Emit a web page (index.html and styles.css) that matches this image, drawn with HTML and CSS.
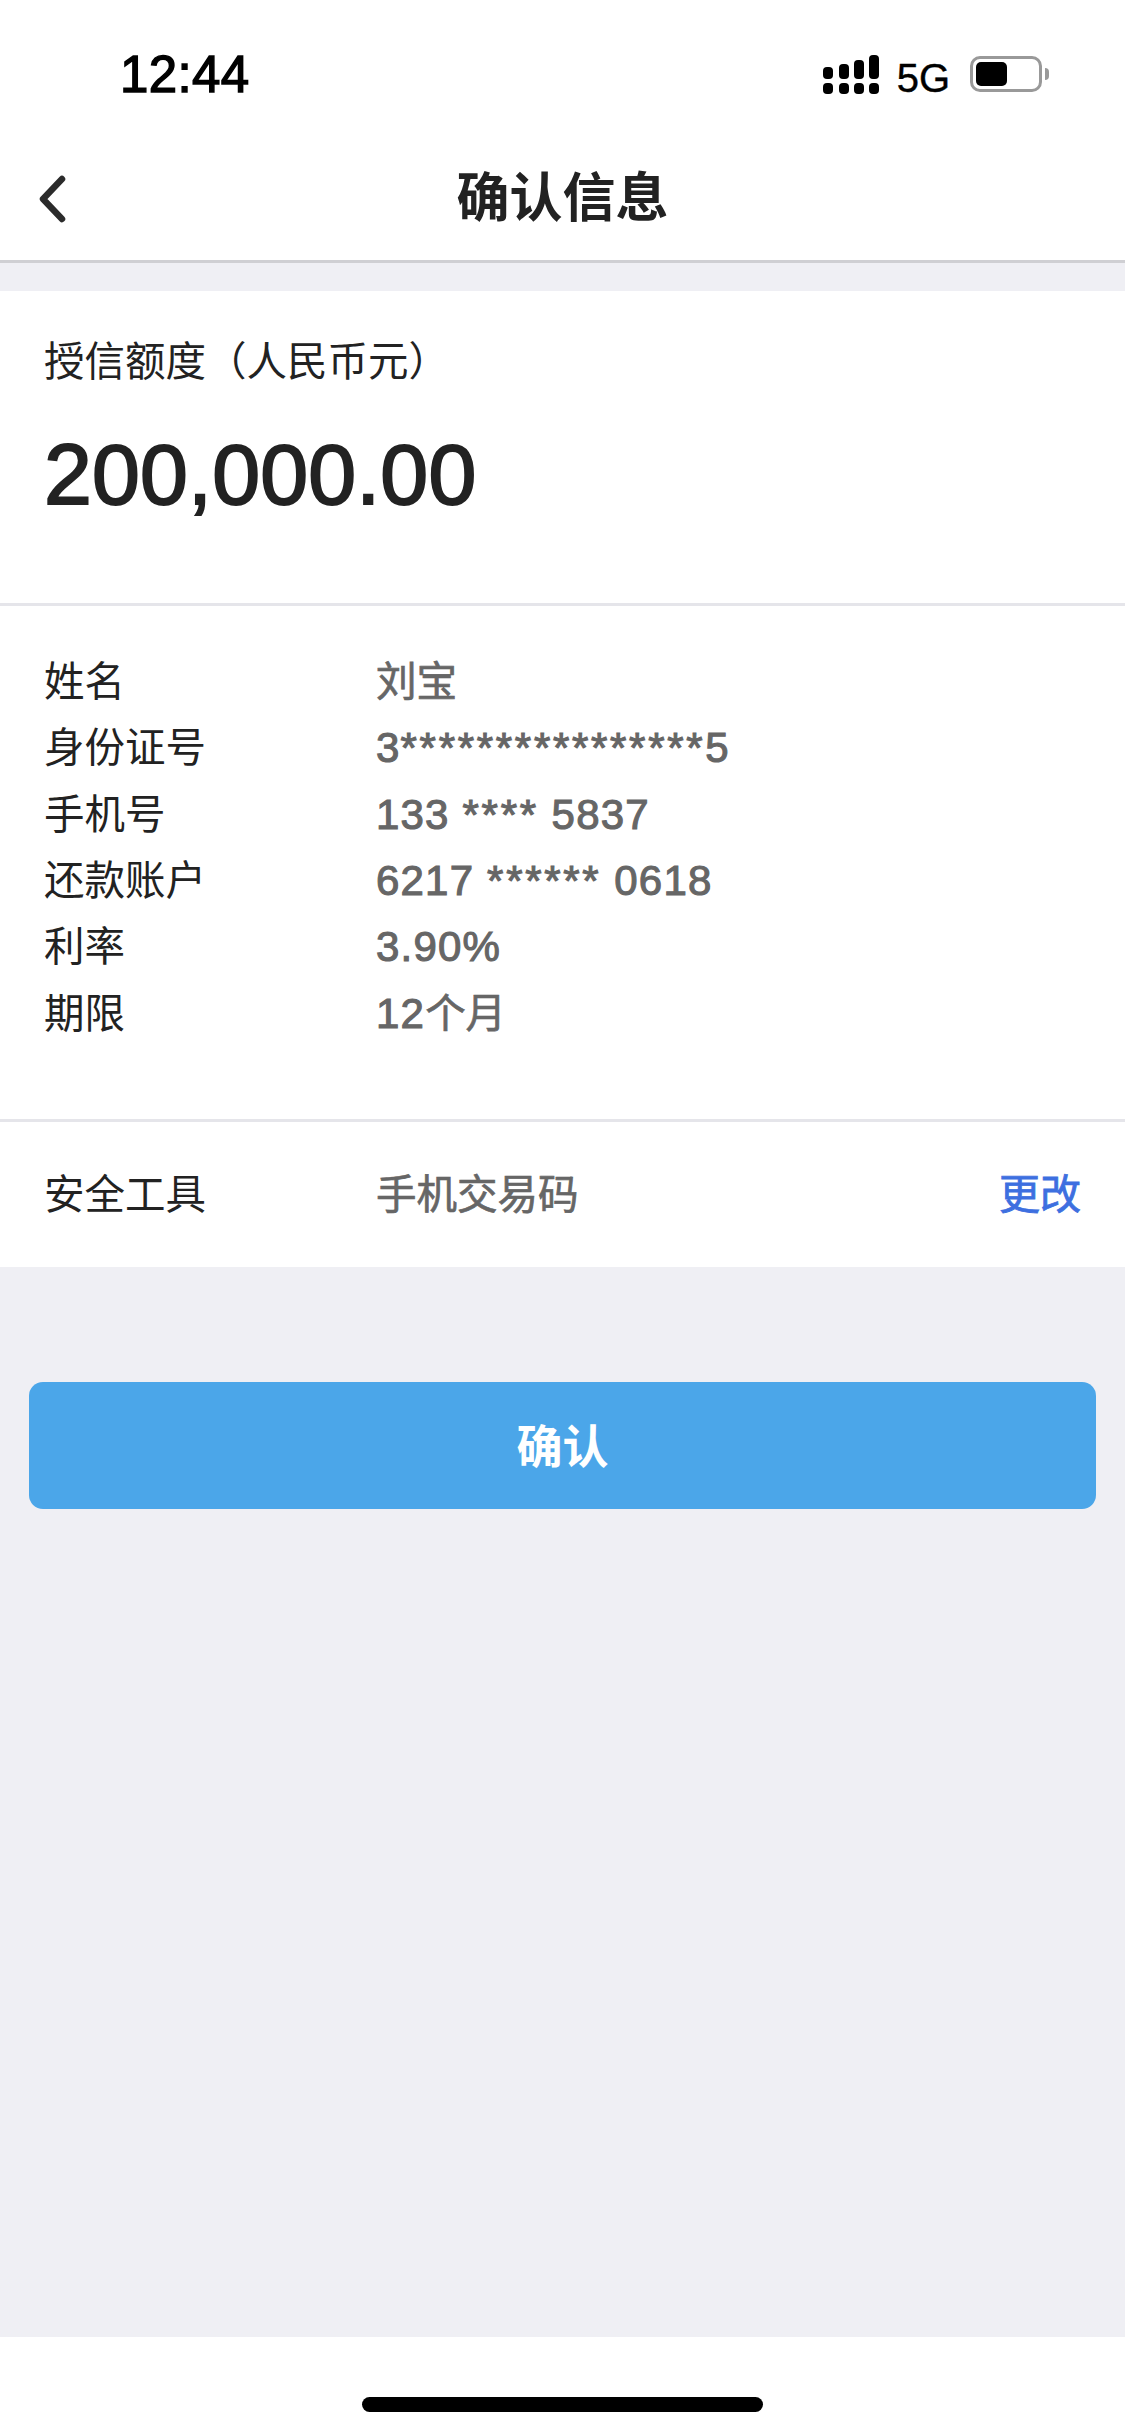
FILE: index.html
```html
<!DOCTYPE html>
<html lang="zh-CN">
<head>
<meta charset="utf-8">
<title>确认信息</title>
<link rel="stylesheet" href="styles.css">
</head>
<body>
<div class="page">
  <header class="status-bar">
    <span class="clock">12:44</span>
    <div class="status-icons">
      <svg class="signal" width="58" height="40" viewBox="0 0 58 40" aria-hidden="true">
        <rect x="0" y="12" width="10" height="12" rx="4"/>
        <rect x="16" y="9" width="10" height="15" rx="4"/>
        <rect x="31" y="5" width="10" height="19" rx="4"/>
        <rect x="46" y="0" width="10" height="24" rx="4"/>
        <rect x="0" y="28" width="10" height="11" rx="4"/>
        <rect x="16" y="28" width="10" height="11" rx="4"/>
        <rect x="31" y="28" width="10" height="11" rx="4"/>
        <rect x="46" y="28" width="10" height="11" rx="4"/>
      </svg>
      <span class="network">5G</span>
      <div class="battery"><div class="battery-level"></div></div>
      <div class="battery-cap"></div>
    </div>
  </header>

  <nav class="nav-bar">
    <svg class="back" width="30" height="50" viewBox="0 0 30 50" aria-hidden="true">
      <path d="M24 4 L5 24 L24 44" fill="none" stroke="#2b2b2b" stroke-width="6.5" stroke-linecap="round" stroke-linejoin="round"/>
    </svg>
    <h1 class="nav-title">确认信息</h1>
  </nav>

  <section class="amount-card">
    <p class="amount-label">授信额度（人民币元）</p>
    <p class="amount">200,000.00</p>
  </section>

  <section class="details">
    <div class="row"><span class="key">姓名</span><span class="val cjk">刘宝</span></div>
    <div class="row"><span class="key">身份证号</span><span class="val">3<span class="mask">****************</span>5</span></div>
    <div class="row"><span class="key">手机号</span><span class="val">133 <span class="mask">****</span> 5837</span></div>
    <div class="row"><span class="key">还款账户</span><span class="val">6217 <span class="mask">******</span> 0618</span></div>
    <div class="row"><span class="key">利率</span><span class="val">3.90%</span></div>
    <div class="row"><span class="key">期限</span><span class="val">12<span class="cjk">个月</span></span></div>
  </section>

  <section class="security">
    <span class="key">安全工具</span>
    <span class="val cjk tool">手机交易码</span>
    <a class="change">更改</a>
  </section>

  <button class="confirm" type="button"><span class="confirm-text">确认</span></button>

  <footer class="home-area"><div class="home-bar"></div></footer>
</div>
</body>
</html>
```
FILE: styles.css
```css
* { box-sizing: border-box; }

html, body {
  margin: 0;
  padding: 0;
}

body {
  font-family: "Liberation Sans", "Noto Sans CJK SC", sans-serif;
  color: #222;
  background: #efeff4;
}

.page {
  width: 1125px;
  height: 2435px;
  display: flex;
  flex-direction: column;
  overflow: hidden;
}

/* Status bar */
.status-bar {
  height: 150px;
  flex: none;
  background: #fff;
  display: flex;
  justify-content: space-between;
  align-items: flex-start;
  padding: 45px 76px 0 120px;
}

.clock {
  font-size: 51px;
  line-height: 60px;
  letter-spacing: 0.4px;
  color: #000;
  -webkit-text-stroke: 1.4px #000;
}

.status-icons {
  display: flex;
  align-items: flex-start;
  padding-top: 10px;
}

.signal { fill: #000; }

.network {
  font-size: 40px;
  line-height: 46px;
  color: #000;
  margin-left: 16px;
  -webkit-text-stroke: 0.4px #000;
}

.battery {
  width: 72px;
  height: 36px;
  margin-left: 20px;
  margin-top: 1px;
  border: 3px solid #999;
  border-radius: 10px;
  padding: 3px;
}

.battery-level {
  width: 31px;
  height: 24px;
  background: #000;
  border-radius: 5px;
}

.battery-cap {
  width: 4px;
  height: 12px;
  margin-left: 3px;
  margin-top: 13px;
  background: #999;
  border-radius: 0 4px 4px 0;
}

/* Navigation bar */
.nav-bar {
  position: relative;
  height: 113px;
  flex: none;
  background: #fff;
  border-bottom: 3px solid #cfcfd3;
  display: flex;
  align-items: center;
  justify-content: center;
  margin-bottom: 28px;
}

.back {
  position: absolute;
  left: 38px;
  top: 25px;
}

.nav-title {
  margin: 0;
  font-size: 53px;
  font-weight: 700;
  line-height: 60px;
  color: #222;
  padding-bottom: 12px;
}

/* Credit amount */
.amount-card {
  height: 315px;
  flex: none;
  background: #fff;
  border-bottom: 3px solid #e5e5ea;
  padding: 47px 44px 0;
}

.amount-label {
  margin: 0;
  font-size: 40.5px;
  line-height: 48px;
  color: #222;
}

.amount {
  margin: 39px 0 0;
  font-size: 86px;
  line-height: 98px;
  letter-spacing: 0.2px;
  color: #222;
  -webkit-text-stroke: 2px #222;
}

/* Detail rows */
.details {
  height: 516px;
  flex: none;
  background: #fff;
  border-bottom: 3px solid #e5e5ea;
  padding: 43px 44px 0;
}

.row {
  height: 66.33px;
  display: flex;
  align-items: center;
}

.key {
  width: 332px;
  flex: none;
  font-size: 40.5px;
  line-height: 48px;
  color: #222;
}

.val {
  font-size: 42px;
  line-height: 48px;
  color: #666;
  letter-spacing: 1.2px;
  -webkit-text-stroke: 1.1px #666;
}

.val.cjk, .val .cjk {
  font-size: 40.5px;
  letter-spacing: 0;
  -webkit-text-stroke: 0.7px #666;
}

.mask { letter-spacing: 2.7px; }

/* Security tool */
.security {
  height: 145px;
  flex: none;
  background: #fff;
  display: flex;
  align-items: center;
  padding: 0 44px;
}

.tool { flex: 1; }

.change {
  font-size: 41px;
  line-height: 48px;
  color: #3d6fe0;
  -webkit-text-stroke: 0.8px #3d6fe0;
}

/* Confirm button */
.confirm {
  display: block;
  flex: none;
  height: 127px;
  margin: 115px 29px 0;
  padding: 0 0 6px;
  border: 0;
  border-radius: 14px;
  background: #4ba6e9;
  color: #fff;
  font-family: inherit;
  font-size: 46px;
  font-weight: 700;
}

/* Home indicator */
.home-area {
  margin-top: auto;
  height: 98px;
  flex: none;
  background: #fff;
  padding: 60px 362px 0;
}

.home-bar {
  height: 15px;
  background: #000;
  border-radius: 8px;
}
```
